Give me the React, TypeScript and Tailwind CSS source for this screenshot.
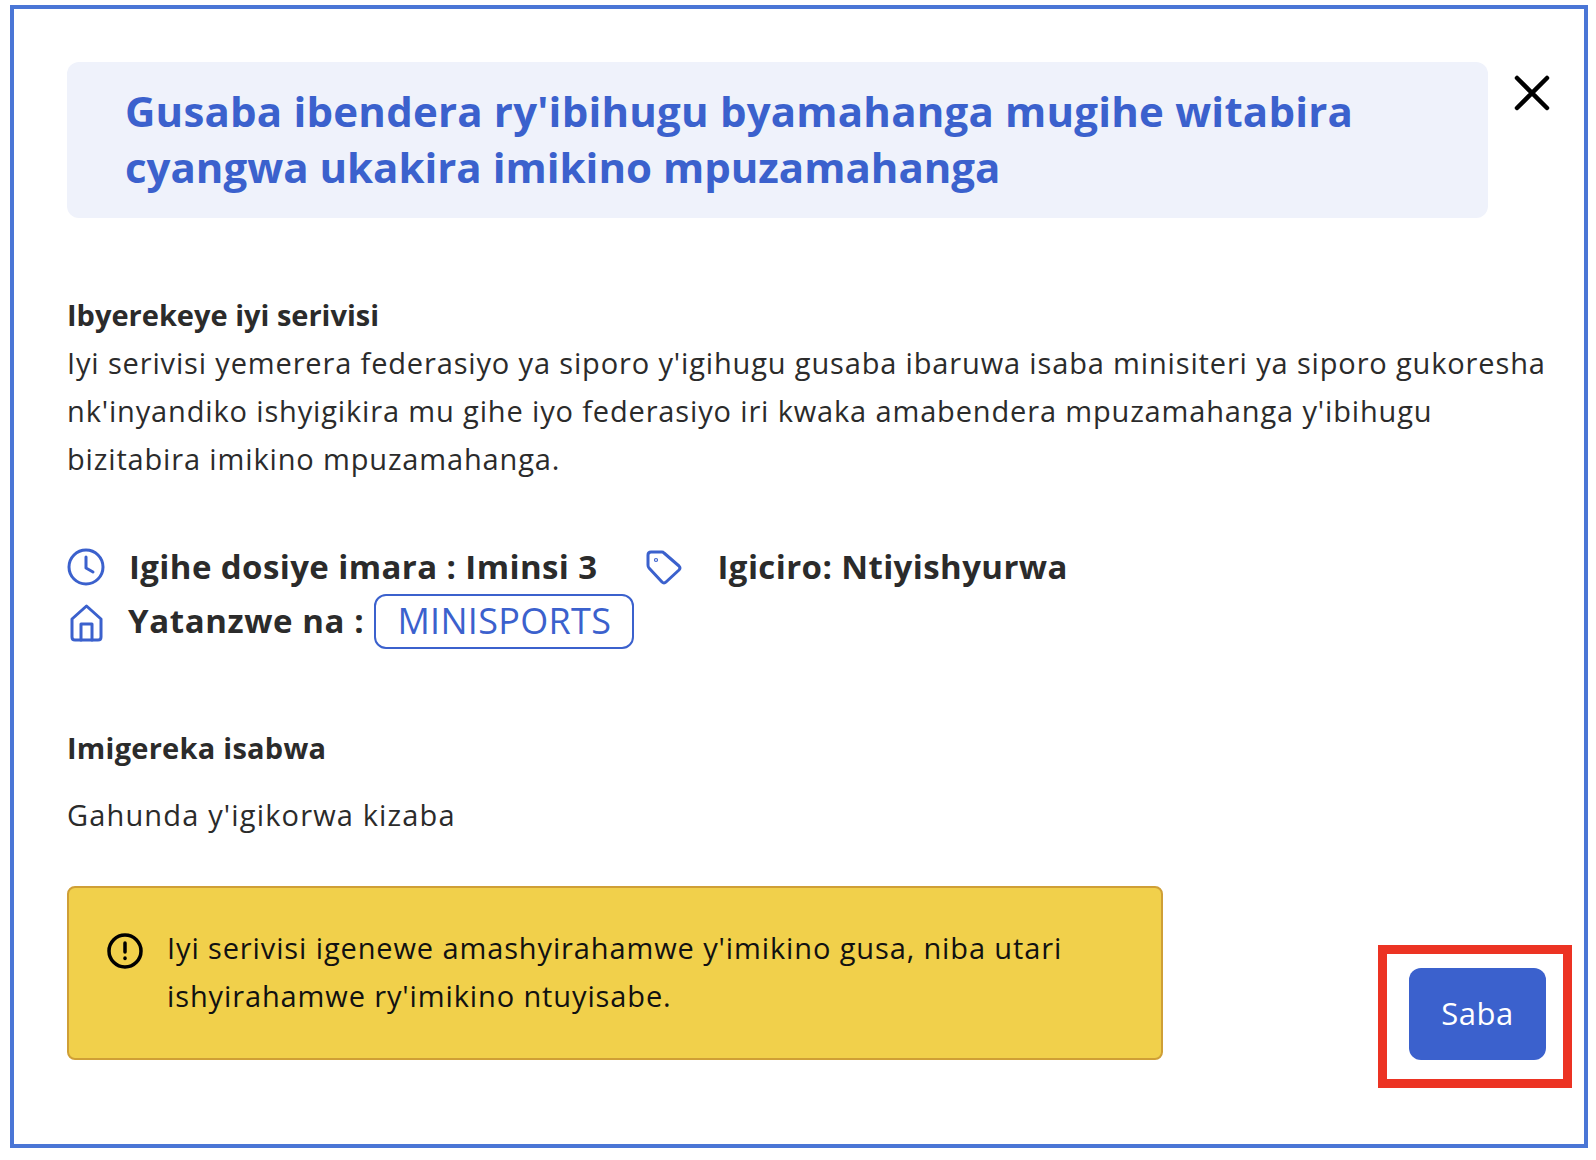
const font = { fontFamily: '"Open Sans", "Noto Sans", sans-serif' };

export default function App() {
  return (
    <div className="w-[1596px] h-[1160px] bg-white pt-[5px] pl-[10px] overflow-hidden" style={font}>
      <div className="relative w-[1578px] h-[1143px] border-[4px] border-[#4a76d6] bg-white pl-[53px] pr-[38px] pt-[53px] text-[#2b2b2b]">
        <div className="flex items-start">
          <div className="w-[1421px] shrink-0 h-[156px] rounded-[12px] bg-[#eff2fb] pl-[58px] pt-[21px] text-[42px] leading-[56px] font-bold text-[#3b61cd]">
            <div className="tracking-[0.2px]">Gusaba ibendera ry'ibihugu byamahanga mugihe witabira</div>
            <div className="tracking-[0px]">cyangwa ukakira imikino mpuzamahanga</div>
          </div>
          <svg className="ml-[25px] mt-[12px] shrink-0" width="38" height="38" viewBox="0 0 38 38" fill="none" stroke="#000" strokeWidth="4.5" strokeLinecap="round">
            <path d="M4 4 L34 34 M34 4 L4 34" />
          </svg>
        </div>

        <div className="mt-[73px] text-[29px] leading-[48px]">
          <div className="font-bold">Ibyerekeye iyi serivisi</div>
          <div className="w-[1500px] tracking-[0.85px]">
            Iyi serivisi yemerera federasiyo ya siporo y'igihugu gusaba ibaruwa isaba minisiteri ya siporo gukoresha
            <br />
            nk'inyandiko ishyigikira mu gihe iyo federasiyo iri kwaka amabendera mpuzamahanga y'ibihugu
            <br />
            bizitabira imikino mpuzamahanga.
          </div>
        </div>

        <div className="mt-[63px] text-[33px] font-bold leading-[42px] tracking-[0.4px]">
          <div className="flex items-center h-[42px]">
            <svg width="38" height="38" viewBox="0 0 38 38" fill="none" stroke="#3b61cd" strokeWidth="3" strokeLinecap="round" strokeLinejoin="round">
              <circle cx="19" cy="19" r="17" />
              <path d="M19 9 V20 L26 24" />
            </svg>
            <span className="ml-[24px]">Igihe dosiye imara : Iminsi 3</span>
            <svg className="ml-[48px] shrink-0" width="36" height="35" viewBox="0 0 36 35" fill="none" stroke="#3b61cd" strokeWidth="3" strokeLinecap="round" strokeLinejoin="round">
              <path d="M2 5 Q2 2 5 2 H16 Q17 2 18 3 L33 16 Q35 18 33 20 L20 32 Q18 34 16 32 L3 18 Q2 17 2 15 Z" />
              <circle cx="10" cy="10" r="0.6" />
            </svg>
            <span className="ml-[36px]">Igiciro: Ntiyishyurwa</span>
          </div>
          <div className="flex items-center h-[56px] mt-[5px]">
            <svg className="mt-[4px] ml-[3px] shrink-0" width="33" height="38" viewBox="0 0 33 38" fill="none" stroke="#3b61cd" strokeWidth="3" strokeLinecap="round" strokeLinejoin="round">
              <path d="M2 15 L16.5 2 L31 15 V33 Q31 36 28 36 H5 Q2 36 2 33 Z" />
              <path d="M11 36 V20 H22 V36" />
            </svg>
            <span className="ml-[25px] tracking-[0.6px]">Yatanzwe na :</span>
            <span className="ml-[10px] flex h-[55px] w-[260px] items-center justify-center rounded-[12px] border-[2px] border-[#3b61cd] font-normal text-[36px] tracking-[0.3px] text-[#3b61cd]">
              MINISPORTS
            </span>
          </div>
        </div>

        <div className="mt-[75px] text-[29px] leading-[48px] font-bold tracking-[0.25px]">Imigereka isabwa</div>
        <div className="mt-[19px] text-[29px] leading-[48px] tracking-[1.15px]">Gahunda y'igikorwa kizaba</div>

        <div className="mt-[47px] flex items-end justify-between">
          <div className="flex w-[1096px] h-[174px] rounded-[8px] border-[2px] border-[#cf9f36] bg-[#f1d04b] pl-[38px] pt-[36px] text-[29px] leading-[48px] tracking-[0.88px] text-[#111]">
            <svg className="mt-[9px] shrink-0" width="36" height="36" viewBox="0 0 36 36" fill="none" stroke="#000" strokeWidth="3.5" strokeLinecap="round">
              <circle cx="18" cy="18" r="16" />
              <path d="M18 10 V19" />
              <path d="M18 25 V25.5" />
            </svg>
            <div className="ml-[24px]">
              Iyi serivisi igenewe amashyirahamwe y'imikino gusa, niba utari
              <br />
              ishyirahamwe ry'imikino ntuyisabe.
            </div>
          </div>
          <button className="w-[137px] h-[92px] rounded-[12px] bg-[#3b61cd] pb-[2px] text-white text-[31px] tracking-[0.5px]">Saba</button>
        </div>

        <div className="absolute left-[1364px] top-[936px] w-[194px] h-[143px] border-[9px] border-[#ec3323]" />
      </div>
    </div>
  );
}
